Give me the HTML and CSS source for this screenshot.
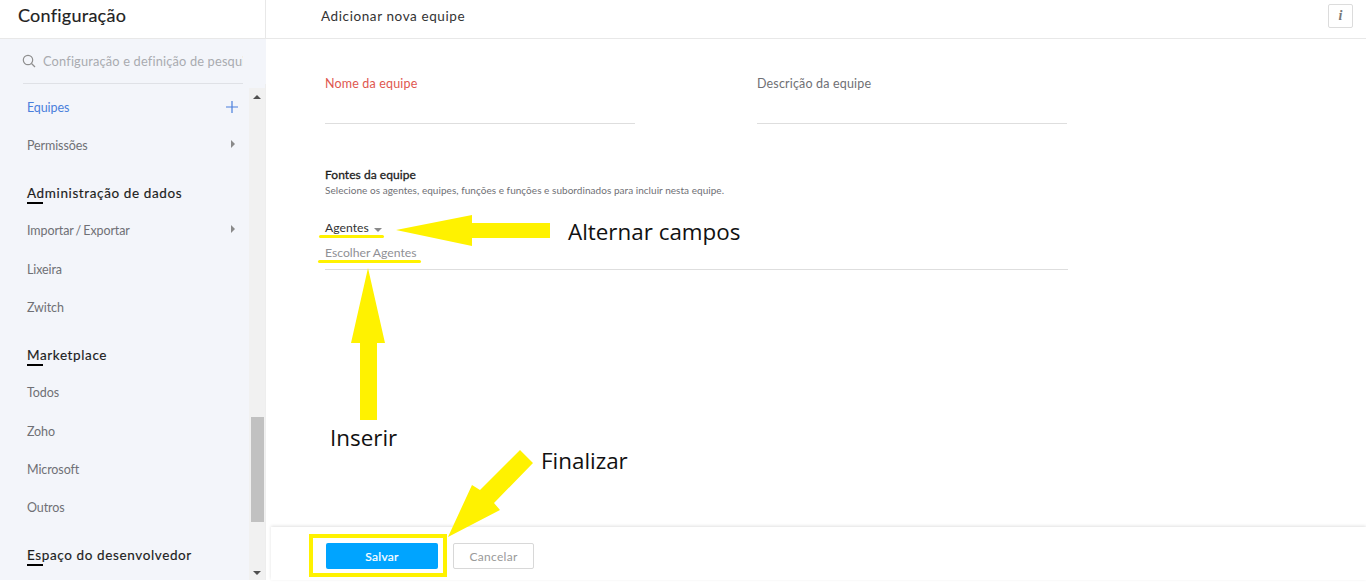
FILE: index.html
```html
<!DOCTYPE html>
<html lang="pt">
<head>
<meta charset="utf-8">
<title>Adicionar nova equipe</title>
<link rel="stylesheet" href="styles.css">
</head>
<body>
<div class="app">
  <aside class="sidebar">
    <div class="side-title">Configuração</div>
    <div class="search">
      <svg class="search-icon" width="14" height="14" viewBox="0 0 14 14"><circle cx="6" cy="6" r="4.7" fill="none" stroke="#8f8f8f" stroke-width="1.2"/><path d="M9.5 9.5L13 13" stroke="#8f8f8f" stroke-width="1.3"/></svg>
      <input class="search-input" type="text" placeholder="Configuração e definição de pesquisa">
    </div>
    <div class="side-body">
      <nav class="nav">
        <div class="item active">Equipes<svg class="plus" width="12" height="12" viewBox="0 0 12 12"><path d="M6 0V12M0 6H12" stroke="#4a7fdc" stroke-width="1.2"/></svg></div>
        <div class="item">Permissões<span class="caret"></span></div>
        <div class="heading"><span>Administração de dados</span></div>
        <div class="item">Importar / Exportar<span class="caret"></span></div>
        <div class="item">Lixeira</div>
        <div class="item">Zwitch</div>
        <div class="heading"><span>Marketplace</span></div>
        <div class="item">Todos</div>
        <div class="item">Zoho</div>
        <div class="item">Microsoft</div>
        <div class="item">Outros</div>
        <div class="heading"><span>Espaço do desenvolvedor</span></div>
      </nav>
      <div class="scrollbar">
        <span class="arrow-up"></span>
        <div class="thumb"></div>
        <span class="arrow-down"></span>
      </div>
    </div>
  </aside>
  <main class="main">
    <header class="topbar">
      <h1 class="page-title">Adicionar nova equipe</h1>
      <div class="info">i</div>
    </header>
    <section class="form">
      <div class="field-row">
        <div class="field"><label class="label required">Nome da equipe</label></div>
        <div class="field"><label class="label">Descrição da equipe</label></div>
      </div>
      <h2 class="sources-title">Fontes da equipe</h2>
      <p class="sources-desc">Selecione os agentes, equipes, funções e funções e subordinados para incluir nesta equipe.</p>
      <div class="picker">Agentes<span class="picker-caret"></span></div>
      <div class="choose">Escolher Agentes</div>
    </section>
    <footer class="actions">
      <button class="btn primary">Salvar</button>
      <button class="btn secondary">Cancelar</button>
    </footer>
  </main>
</div>
<svg class="overlay" width="1366" height="582" viewBox="0 0 1366 582">
  <g fill="#fff200">
    <rect x="319" y="235" width="65" height="3" rx="1.5"/>
    <rect x="318" y="260" width="103" height="3" rx="1.5"/>
    <path d="M396 230L472 215V223H550V238H472V246Z"/>
    <path d="M368 268L385 343H377V420H360V343H351Z"/>
    <path d="M448 537L472 485L480 490L520 450L533 463L494 503L500 510Z"/>
  </g>
  <rect x="311" y="536" width="134" height="39" fill="none" stroke="#fff200" stroke-width="4"/>
</svg>
<div class="note note-toggle">Alternar campos</div>
<div class="note note-insert">Inserir</div>
<div class="note note-finish">Finalizar</div>
</body>
</html>
```
FILE: styles.css
```css
* { box-sizing: border-box; }
html, body { margin: 0; height: 582px; overflow: hidden; background: #fff; }
body { font-family: Lato, "Liberation Sans", sans-serif; color: #222; position: relative; }
.app { display: flex; height: 580px; }

.sidebar { width: 266px; flex: none; display: flex; flex-direction: column; background: #f3f5fa; }
.side-title { height: 39px; padding: 5px 0 0 18px; background: #fff; border-right: 1px solid #e8e8e8; border-bottom: 1px solid #e8e8e8; font-size: 18px; line-height: 20px; color: #222; letter-spacing: .25px; -webkit-text-stroke: .15px #222; }
.search { height: 45px; margin: 0 23px; padding-top: 14px; width: 220px; display: flex; gap: 7px; border-bottom: 1px solid #dfe1e6; flex: none; }
.search-icon { margin: 1px 0 0 -1px; flex: none; }
.search-input { flex: 1; min-width: 0; height: 16px; padding: 0; border: 0; outline: 0; background: transparent; font-family: inherit; font-size: 12.8px; line-height: 16px; letter-spacing: .17px; }
.search-input::placeholder { color: #a9abb0; opacity: 1; }
.side-body { flex: 1; min-height: 0; display: flex; padding-top: 4px; border-right: 1px solid #eee; }
.nav { flex: 1; min-width: 0; overflow: hidden; }
.item { height: 38.4px; padding: 0 11px 0 27px; display: flex; align-items: center; justify-content: space-between; font-size: 12.5px; color: #6f7075; letter-spacing: -.1px; word-spacing: -1px; }
.item.active { color: #4a7fdc; }
.caret { width: 0; height: 0; border-left: 4px solid #8a8a8a; border-top: 4px solid transparent; border-bottom: 4px solid transparent; margin: -4px 3px 0 0; }
.heading { height: 38px; margin-top: 8.8px; padding: 0 27px; display: flex; align-items: center; font-size: 13.5px; color: #1c1c1c; letter-spacing: .62px; -webkit-text-stroke: .15px #1c1c1c; }
.heading span { position: relative; }
.heading span::after { content: ""; position: absolute; left: 0; top: 17px; width: 16px; height: 2px; background: #000; }
.scrollbar { width: 16px; flex: none; background: #f1f1f1; display: flex; flex-direction: column; align-items: center; padding-top: 7px; }
.arrow-up { width: 0; height: 0; border-left: 4px solid transparent; border-right: 4px solid transparent; border-bottom: 4px solid #505050; }
.thumb { width: 13px; height: 105px; background: #c1c1c1; margin-top: 318px; }
.arrow-down { width: 0; height: 0; border-left: 4px solid transparent; border-right: 4px solid transparent; border-top: 4px solid #505050; margin-top: 49px; }

.main { flex: 1; min-width: 0; display: flex; flex-direction: column; }
.topbar { height: 39px; flex: none; display: flex; align-items: flex-start; justify-content: space-between; border-bottom: 1px solid #e8e8e8; padding: 7px 13px 0 55px; }
.page-title { margin: 0; font-size: 13.5px; line-height: 18px; font-weight: 400; color: #333; letter-spacing: .6px; }
.info { width: 25px; height: 24px; margin-top: -3px; border: 1px solid #dcdcdc; border-radius: 2px; text-align: center; font: italic 700 14px/22px "Liberation Serif", serif; color: #777; }

.form { flex: 1; min-height: 0; padding: 37px 0 0 59px; }
.field-row { display: flex; gap: 122px; }
.field { width: 310px; height: 48px; border-bottom: 1px solid #dedede; }
.label { display: block; font-size: 12.5px; line-height: 16px; color: #6f7075; letter-spacing: .17px; }
.label.required { color: #e0574f; }
.sources-title { margin: 43px 0 0; font-size: 12px; line-height: 16px; font-weight: 400; color: #1c1c1c; letter-spacing: .05px; -webkit-text-stroke: .3px #1c1c1c; }
.sources-desc { margin: 0; font-size: 10px; line-height: 14px; color: #6f7075; letter-spacing: .04px; }
.picker { margin-top: 23px; font-size: 12.2px; line-height: 16px; color: #333; display: flex; align-items: center; }
.picker-caret { width: 0; height: 0; margin: 3px 0 0 5px; border-left: 4px solid transparent; border-right: 4px solid transparent; border-top: 4px solid #8a8a8a; }
.choose { width: 743px; height: 25px; margin-top: 9px; font-size: 12.2px; line-height: 16px; color: #8f9095; border-bottom: 1px solid #dedede; }

.actions { height: 53px; flex: none; margin-left: 5px; display: flex; gap: 15px; padding: 16px 0 0 55px; box-shadow: 0 -1px 3px rgba(0,0,0,.12); }
.btn { height: 26px; font-family: inherit; font-size: 12px; letter-spacing: .3px; border-radius: 2px; padding: 0; }
.primary { width: 112px; background: #00a4ff; border: 0; color: #fff; -webkit-text-stroke: .2px #fff; }
.secondary { width: 81px; background: #fff; border: 1px solid #d8d8d8; color: #9a9a9a; }

.overlay { position: absolute; left: 0; top: 0; }
.note { position: absolute; font-family: "Open Sans", "Noto Sans", sans-serif; font-size: 22.4px; line-height: 30px; color: #111; white-space: nowrap; }
.note-toggle { left: 568px; top: 217px; }
.note-insert { left: 330px; top: 423px; }
.note-finish { left: 541px; top: 446px; }
```
